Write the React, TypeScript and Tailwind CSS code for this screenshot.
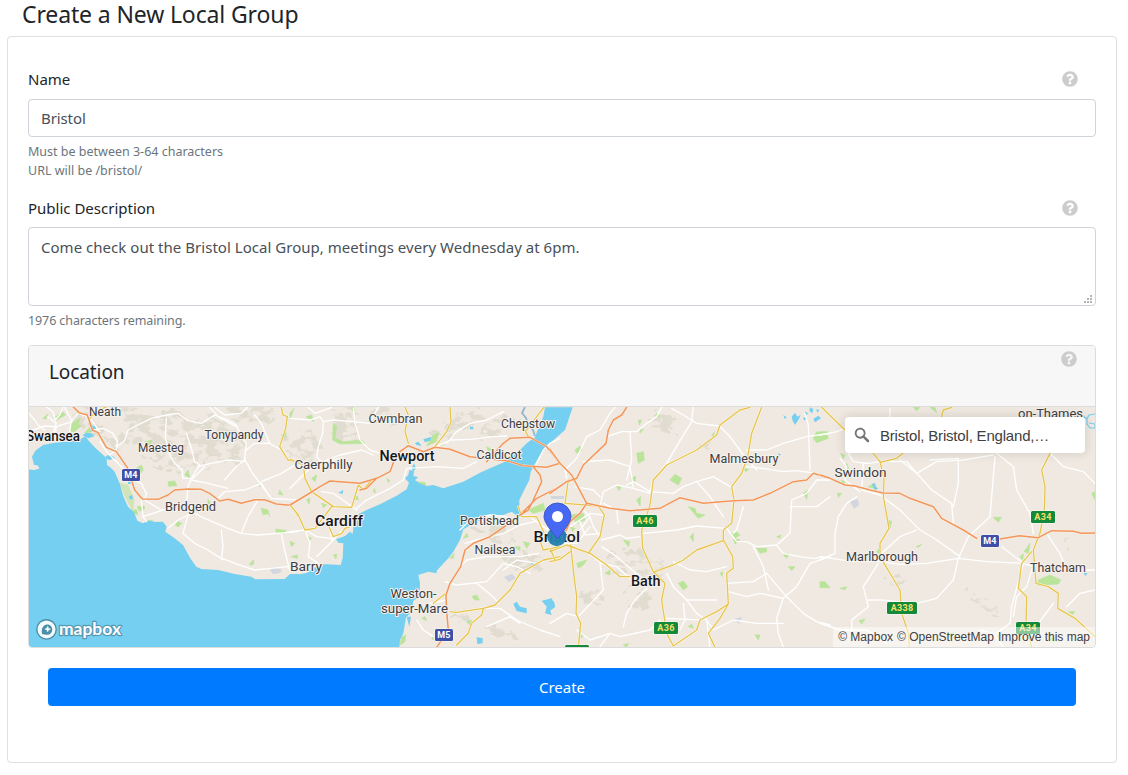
import React from "react";
import { FaQuestionCircle } from "react-icons/fa";

type Tile = { x: number; roads: string[]; main: string[]; motorway: string[]; parks: string[]; relief: string[] };

// Each tile is drawn at three units per pixel, with its own horizontal origin.
const west: Tile = {
  x: 28,
  roads: [
    "M3 40L20 60 30 75 50 90M55 20L75 35 82 60 95 45 105 22M0 95L50 78 85 80 130 65 150 40 175 48M85 80L80 110M110 22L130 60 125 95M205 20L185 45M180 45L215 95M60 50L85 70 70 110",
    "M198 90L225 85 255 100 268 125 265 150M265 140L290 122 300 90 330 75 370 55 415 45 450 40 480 62 520 70 560 45 600 60 625 75 640 110 655 130 650 175 670 215 700 255 730 295",
    "M415 55L412 110 425 165 440 190 462 210 465 235M475 100L490 145 500 185 515 195 490 235 480 260 475 320 485 345M545 22L570 50 625 80M655 150L680 130 725 130 760 150M510 200L550 190 600 180 650 185M465 235L495 235 530 200",
    "M216 125L240 160 275 195 310 235 340 250 355 280 350 300 400 330 480 330 530 355 600 385 640 400 690 405 810 395",
    "M340 300L345 350 355 365M345 350L405 330M420 385L450 360 480 345 490 320M480 345L465 400 500 430 540 450 570 470 620 490 680 510 730 505 780 500M580 390L585 440 580 480M640 400L660 350 690 300M760 400L770 450 785 510M730 295L810 300M570 295L590 275 650 270 700 250 725 290M700 245L760 220 810 190M490 240L540 250 600 265",
    "M265 150L245 165 225 140M560 22L590 45 640 40 660 20M725 130L700 70 680 45M650 180L620 205 590 240",
  ],
  main: ["M760 22L765 45 778 50 773 85 755 140 780 180 810 185", "M786 315L800 330 810 350", "M182 60L200 38 235 20"],
  motorway: ["M135 20L153 38 178 45 193 90 210 98 235 142 265 155 298 203 312 245 320 270 343 297 390 298 420 285 440 270 480 267 520 268 545 280 575 303 600 298 640 310 680 299 710 299 745 312 785 316 810 300"],
  parks: [
    "M45 55L60 42 53 58ZM78 53L105 36 113 44 85 61ZM125 92L133 70 157 55 150 72 160 78 138 96ZM170 98L185 82 188 97Z",
    "M302 335L325 328 330 343 310 342ZM328 320L348 318 350 326 335 334ZM420 246L440 243 447 257 422 259ZM325 205L340 195 346 210 335 223ZM470 225L480 210 486 235ZM442 375L450 365 461 370 450 381ZM360 362L374 360 367 371Z",
    "M700 325L705 345 722 340 725 350 720 330ZM755 270L765 285 752 283ZM743 387L775 392 770 400 745 399ZM790 425L800 431 793 438ZM665 492L676 480 677 492 668 496ZM690 250L700 250 696 260ZM760 105L775 98 772 120ZM350 125L372 120 365 137ZM540 298L548 310 540 316ZM790 470L808 465 808 475Z",
  ],
  relief: [
    "M120 60L180 20 230 100 270 135 300 90 370 80 420 40 500 75 545 55 600 80 650 140 630 190 560 170 520 180 495 215 440 180 400 130 360 150 320 110 280 150 240 120 190 90Z",
    "M300 20L360 50 420 25 480 60 430 65 350 90 320 75 290 100ZM390 70L460 100 440 135 480 180 450 200 395 135ZM510 90L590 65 620 100 600 145 560 130 535 165 505 150ZM600 20L730 25 735 65 690 55 650 75 610 50ZM360 180L425 165 440 205 390 205Z",
  ],
};

const severn: Tile = {
  x: 290,
  roads: [
    "M0 55L60 60 90 50 100 65 98 100 85 140 80 170 95 185 160 175M55 22L75 40 125 22M100 65L130 60 190 65 240 70 265 20M190 25L195 70 210 120 240 150 270 160M0 265L60 205 110 180 150 165 215 150 250 165",
    "M435 142L480 120 540 118 610 110 650 108M350 205L440 200 520 205 560 185M350 205L340 240 300 265 230 300 200 325M470 130L500 95 540 70 590 60 640 35M0 395L45 390 80 410 120 415M95 275L130 280 200 330M120 390L125 420 160 390M45 390L60 430 55 470 85 490M135 415L110 440 80 470",
    "M510 390L540 360 600 345 650 350M525 430L560 420 640 400 690 375 735 365M510 500L530 480 590 470 690 470 745 460M465 545L500 555 590 545 640 490 680 500 720 520M580 625L630 625 680 660 750 690 810 710M380 660L400 690 430 710M560 550L610 590 625 610M590 680L660 650 690 670M420 610L470 600M720 350L760 380 810 410M735 200L760 150 780 130 810 115M640 510L680 480 740 490",
  ],
  main: [
    "M345 22L355 45 345 95 355 130M480 22L483 65 470 95 435 140M0 178L40 195 45 235 65 275 130 320 185 322 205 255M0 315L25 345 45 390 75 385 125 320M115 375L130 410 155 400 165 385 180 380M705 90L715 110M762 22L740 50 710 90M205 255L220 270 245 240",
    "M430 610L465 582M480 635L500 637 580 625 615 615 660 570 690 520 725 500 760 480 810 470M580 625L575 645 545 670 535 700 500 735M685 320L695 350 740 350 765 405 810 420M745 410L760 450 810 440",
  ],
  motorway: [
    "M0 315L50 285 90 260 120 243 210 250 260 235 300 215 313 180 330 155 355 137 400 155 435 142 480 148 540 170 650 182 700 197 770 202 810 190",
    "M590 185L640 130 660 115 720 112 770 140 810 190M730 200L750 225 755 245 730 300 715 330 690 345 650 375 600 410 550 430 525 450 512 500 480 550 468 585 470 635 475 690 440 742M700 335L740 295 810 260M210 270L230 265 260 235",
  ],
  parks: [
    "M0 40L12 25 0 58ZM48 50L65 45 72 65ZM130 70L140 80 135 115 160 125 215 120 225 130 150 132 128 120ZM410 138L430 105 447 98 438 125ZM185 20L195 30 188 34ZM65 235L80 225 75 245ZM50 298L60 295 57 312ZM95 310L110 315 100 323ZM190 295L202 287 205 300ZM250 275L253 265 257 278ZM290 235L300 242 295 247Z",
    "M375 245L405 248 408 262 380 258ZM520 415L530 400 535 410ZM480 475L492 460 490 475ZM545 590L560 585 568 600 555 600ZM715 330L760 310 765 330 730 340ZM700 425L720 430 710 445ZM670 440L690 440 690 452ZM530 665L545 660 540 675ZM335 712L347 705 345 725 330 735ZM395 655L405 650 410 662ZM425 715L430 710 430 720ZM590 140L605 148 595 155ZM55 410L65 415 58 422ZM0 425L12 430 4 440ZM130 465L140 462 138 477Z",
  ],
  relief: [
    "M120 50L180 22 200 45 195 100 160 125 140 110ZM0 125L60 85 85 140 60 180 0 160ZM430 110L490 50 560 20 570 50 500 95 450 135ZM560 390L650 380 680 410 620 425ZM645 475L740 470 735 505 670 500ZM480 650L520 640 530 660Z",
    "M240 70L290 25 310 60 280 85ZM580 105L615 65 670 60 640 90ZM600 690L650 685 670 710 630 710Z",
  ],
};

const bath: Tile = {
  x: 550,
  roads: [
    "M50 235L45 210 80 175 110 110 150 90 180 40 195 22M170 110L215 95 260 95 290 70 320 50 335 22M430 20L425 65 385 130 350 190M365 25L400 45 440 70 508 78 540 110 580 165 620 210M590 150L650 150 700 130 770 110 840 100M765 40L775 75 780 210M590 200L640 205 700 215 740 212 800 220M300 280L250 265 200 255 160 275 150 320",
    "M300 275L370 280 400 260 440 245 490 230 550 265M300 275L310 240 350 190M155 420L210 405 230 415 270 410M280 400L380 390 440 378 530 385M160 310L200 330 205 370M530 385L560 425 590 425 620 440 680 435 700 460 750 470 790 475 840 470M680 435L720 400 725 300 770 280 800 240 840 240M530 550L610 545 650 520 710 590 760 640 800 665 840 675M700 595L630 580 590 590 535 575M700 595L680 655 685 700 700 742M700 595L740 560 780 490 840 470",
    "M120 350L130 380 150 410M90 390L120 350 100 330M115 460L155 490 200 500 240 535M0 670L50 640 85 650 160 570 150 490M80 690L120 720 180 700 210 710 300 690 330 660M290 565L255 600 230 640 220 680M180 700L150 740M350 520L370 560 410 600 440 640 470 660 480 742M370 485L420 510 470 515 530 500M400 610L405 660 390 690M410 600L500 600M350 655L450 660M470 660L490 690 550 660 620 670 700 670M610 440L640 500 655 570M580 320L560 390 550 400M230 255L250 245 300 275M75 260L130 270 150 290M60 380L120 340 160 345M90 365L105 405 150 400",
    "M100 185L180 180 240 200 250 260M240 95L245 180 230 240M0 430L80 430 120 380M155 440L200 470 270 530M720 320L800 320 840 290M520 350L480 290 440 245",
  ],
  main: [
    "M600 22L570 30 510 75 500 105 440 150 350 195 310 240 300 315 275 390 278 445 310 515 345 550 335 600 350 700 370 738 440 690 450 660 500 635 535 612M635 22L605 100 593 170 575 220 545 260 552 300 545 370 520 390 520 420 548 470 550 505 530 520 535 612 510 655 475 700 495 742",
    "M315 515L370 495 400 480 440 450 520 422M0 455L50 435 120 460 170 495 210 530 240 530M55 240L45 310 145 318 163 345 150 410 115 460M62 435L72 530 80 590 78 640 92 670 85 742M0 485L30 478 60 455M0 445L15 480",
  ],
  motorway: [
    "M230 22L215 45 190 60 175 90 168 130 100 195 80 235 50 245 0 280M0 148L30 190 65 225 110 310 180 325 240 332 330 325 390 293 460 310 550 302 610 300 660 280 730 245 770 240 790 220 840 235M110 310L90 340 60 365 40 410",
  ],
  parks: [
    "M75 150L90 138 96 150 80 160ZM260 160L280 155 283 180 265 190ZM360 240L375 223 395 235 385 255ZM245 235L257 228 255 250 247 250ZM200 260L215 258 207 272ZM260 300L272 290 270 318ZM415 320L435 325 440 340 465 345 445 355ZM320 40L330 48 318 52ZM270 90L280 87 270 100ZM485 105L493 97 490 110ZM790 115L800 95 830 100 835 115 800 128Z",
    "M60 345L100 340 105 360 80 370ZM25 380L50 395 30 400ZM420 410L430 400 430 425ZM220 420L240 425 235 440ZM545 400L560 395 570 405 555 415ZM385 550L400 543 413 560 400 570ZM165 520L180 510 180 525ZM92 700L103 705 93 715ZM415 680L425 672 430 685ZM620 445L650 445 650 455 630 460ZM715 500L735 500 725 512ZM700 465L716 460 710 475ZM680 410L692 405 690 415ZM615 705L630 705 625 720ZM760 280L775 270 770 298ZM80 490L110 480 100 495 85 505ZM220 735L235 730 230 742ZM580 205L597 208 587 215ZM550 415L570 420 555 432ZM510 520L518 515 517 530ZM265 60L275 60 268 75ZM60 380L75 385 68 395Z",
  ],
  relief: [
    "M220 460L260 440 300 490 340 480 350 510 300 540 250 500 180 500ZM250 570L300 590 290 630 240 620ZM310 80L340 30 360 50 350 90ZM350 60L375 60 370 85ZM90 590L140 570 150 590 100 600ZM460 135L480 130 475 145Z",
  ],
};

const east: Tile = {
  x: 820,
  roads: [
    "M0 105L50 95 75 85M85 160L100 185 145 190 180 185M130 190L125 270 180 285M60 175L80 200 75 240 120 275M110 290L80 310 55 350 45 400 45 460 0 480M0 470L100 485 180 485 240 493 320 490 415 475 500 485 610 490M415 475L445 410 510 350 525 170M415 475L400 540 350 595 290 610 180 600 145 600M175 490L130 560 145 620 95 660 95 720M210 185L260 185 335 270 395 310 400 370",
    "M180 285L240 330 300 390 350 420 420 470M210 25L210 50M530 160L580 200 590 270 630 340 640 400M330 180L415 175 415 250 400 320M240 180L290 220 350 185 430 180 520 165M690 160L730 200 790 215 825 250M680 400L720 460 740 510 825 510M545 440L610 490 640 500M610 490L575 620 570 670 530 700M640 495L620 560 590 590 580 650M825 570L780 580 740 620M700 610L640 690M0 670L60 690 140 690 200 730M480 690L520 700 550 742M185 460L240 410 290 390",
  ],
  main: [
    "M5 22L75 90 160 160 180 185 192 235 190 290 207 385 180 430 180 470 240 570 245 640 265 700 268 742M180 187L230 175 250 158M395 22L370 30 365 50M690 160L665 210 675 260 673 330 660 400 640 450 648 550 685 560 715 580 713 625 765 655 825 710M635 455L605 490 595 565 620 590 618 670 635 742",
  ],
  motorway: ["M0 225L30 235 75 255 105 258 150 270 190 279 240 280 270 295 340 320 365 355 430 390 470 415M540 417L600 407 655 413 695 392 760 394 785 400 825 399"],
  parks: [
    "M0 95L25 95 15 118 0 118ZM62 160L75 165 70 178ZM80 190L86 205 80 210ZM52 280L65 280 55 292ZM145 260L165 250 170 268ZM205 360L215 365 210 385ZM170 455L178 445 180 465ZM520 352L545 352 535 367ZM288 440L305 433 295 442ZM655 540L690 525 722 540 715 552 655 556ZM612 455L630 430 625 460ZM600 470L610 462 608 480ZM0 545L15 545 30 563 0 563ZM60 565L80 560 75 570ZM117 662L135 657 125 672ZM745 635L765 635 758 643ZM815 280L825 275 825 300ZM330 22L345 22 350 38ZM380 700L405 698 390 712ZM65 240L75 245 68 255ZM685 720L700 712 705 725ZM280 22L300 22 290 32Z",
  ],
  relief: ["M460 590L480 590 490 610 470 610ZM490 600L525 620 520 640 505 630ZM215 540L240 535 240 550ZM735 425L742 425 738 432Z"],
};

const tiles: Tile[] = [west, severn, bath, east];

const water: { x: number; d: string }[] = [
  { x: 28, d: "M0 208L20 210 35 205 28 196 18 195 12 170 22 152 45 135 80 128 150 122 172 108 182 122 200 142 236 175 237 195 250 205 260 215 275 250 287 292 300 320 318 337 328 362 345 370 362 362 385 366 405 365 416 380 412 395 440 415 465 435 487 475 505 500 520 507 570 510 620 522 670 530 682 538 770 537 786 522 812 522 812 745 0 745Z" },
  { x: 28, d: "M163 105L175 98 190 100 200 108 182 115ZM188 95L190 75 202 80 205 92ZM232 170L245 163 262 174 245 180 237 178ZM302 290L312 284 315 295 307 299ZM300 245H308V252H300Z" },
  { x: 290, d: "M0 522L20 524 50 519 70 505 95 492 152 495 158 475 160 430 145 428 138 418 165 408 180 395 188 402 190 385 200 345 230 330 270 313 320 287 350 268 357 248 345 235 355 225 358 210 372 213 370 228 385 232 375 240 388 250 410 258 430 255 460 265 490 255 520 245 570 218 600 205 650 183 690 150 710 130 735 112 745 85 760 50 765 22 848 22 825 90 800 112 780 130 750 165 730 200 722 215 718 240 700 275 688 300 688 325 700 345 685 350 665 335 640 345 600 345 560 365 520 388 510 420 490 455 475 475 440 512 440 520 415 515 385 525 390 550 388 590 370 602 365 637 348 652 340 700 330 720 328 745 0 745Z" },
  { x: 290, d: "M145 278L160 270 158 282ZM375 130L385 125 395 138 380 135ZM400 118L425 110 420 122 405 127ZM365 205L372 190 378 205 370 215ZM540 80H550V88H540ZM670 612L680 605 690 620 710 625 710 640 680 633ZM755 602L785 595 795 615 780 630 785 645 765 640 770 620ZM560 712L578 714 578 730 562 732ZM720 488L733 485 730 495ZM350 650L363 650 358 680Z" },
  { x: 550, d: "M0 600L12 605 15 622 0 632ZM725 50L735 38 742 50 752 45 745 60 735 75 728 62ZM765 35L775 40 765 48ZM780 22L790 28 787 40 778 32ZM790 57L805 47 813 55 795 67ZM798 28L808 30 803 38ZM700 45L710 52 704 57ZM685 160L693 163 686 170ZM760 52L770 55 762 62Z" },
  { x: 820, d: "M155 252L163 250 168 262 175 265 165 270ZM790 520L802 518 798 528Z" },
];

const towns = [
  { t: "Neath", x: 89, y: 416, w: 32 }, { t: "Tonypandy", x: 204.5, y: 439, w: 59 },
  { t: "Maesteg", x: 138, y: 452, w: 46 }, { t: "Bridgend", x: 165, y: 511, w: 51 },
  { t: "Caerphilly", x: 294.5, y: 469, w: 58 }, { t: "Cwmbran", x: 368.5, y: 423, w: 54 },
  { t: "Chepstow", x: 501, y: 428, w: 54 }, { t: "Caldicot", x: 476.5, y: 459, w: 45 },
  { t: "Portishead", x: 460, y: 525, w: 59 }, { t: "Nailsea", x: 474.5, y: 554, w: 41 },
  { t: "Weston-", x: 390.5, y: 598, w: 46 }, { t: "super-Mare", x: 381, y: 613, w: 67 },
  { t: "Barry", x: 290, y: 571, w: 32 }, { t: "Malmesbury", x: 709.5, y: 463, w: 69 },
  { t: "Swindon", x: 834.5, y: 477, w: 52 }, { t: "Marlborough", x: 846, y: 561, w: 72 },
  { t: "Thatcham", x: 1030, y: 572, w: 56 }, { t: "on-Thames", x: 1018, y: 418, w: 65 },
];

const cities = [
  { t: "Swansea", x: 26, y: 441, w: 54 }, { t: "Newport", x: 379.5, y: 461, w: 55 },
  { t: "Cardiff", x: 315, y: 525.5, w: 48 }, { t: "Bristol", x: 533.5, y: 542, w: 46.5 },
  { t: "Bath", x: 631, y: 585.5, w: 29.5 },
];

const shields = [
  { t: "M4", x: 122, y: 469, w: 18 }, { t: "M5", x: 435, y: 629, w: 18 }, { t: "M4", x: 981, y: 535, w: 18 },
  { t: "A46", x: 633, y: 515, w: 24 }, { t: "A36", x: 654, y: 622, w: 24 }, { t: "A34", x: 1031, y: 511, w: 24 },
  { t: "A34", x: 1016, y: 622, w: 24 }, { t: "A338", x: 887, y: 602, w: 30 }, { t: "A37", x: 565, y: 645, w: 24 },
];

function MapCanvas() {
  return (
    <svg className="block h-[240px] w-full" viewBox="29 407 1066 240" preserveAspectRatio="none">
      <defs>
        <filter id="relief" x="-5%" y="-5%" width="110%" height="110%">
          <feTurbulence type="fractalNoise" baseFrequency="0.03 0.045" numOctaves="3" seed="6" result="n" />
          <feDisplacementMap in="SourceGraphic" in2="n" scale="70" result="shape" />
          <feColorMatrix in="n" type="matrix" values="0 0 0 0 0  0 0 0 0 0  0 0 0 0 0  9 0 0 0 -4" result="mask" />
          <feComposite in="shape" in2="mask" operator="in" />
        </filter>
      </defs>
      <rect x="29" y="407" width="1066" height="240" fill="#efe9e1" />
      {tiles.map((s) => (
        <g key={s.x} transform={`translate(${s.x} 400) scale(.33333)`}>
          <path d={s.relief.join("")} fill="#dedacd" opacity=".85" stroke="#dedacd" strokeWidth="14" filter="url(#relief)" />
          <path d={s.parks.join("")} fill="#b9e49a" stroke="#b9e49a" strokeWidth="2" strokeLinejoin="round" />
        </g>
      ))}
      <path d="M119.500 483L128 484.500 134.500 500 133 512 125 497Z" fill="#d0e4b8" />
      <g fill="#d3d5df">
        <path d="M270 570l5-3 7 3-2 3-7 1zM504 577l8-3 4 4-7 4zM734 619l8-2-3 7zM850 501l8-2 1 6-5 4zM551 496h13v3h-13z" />
      </g>
      {water.map((s, i) => (
        <path key={i} d={s.d} transform={`translate(${s.x} 400) scale(.33333)`} fill="#75cff0" />
      ))}
      <path d="M525 407l-3 6 4 5 2 6 5 6 2 6" fill="none" stroke="#8fb8cf" strokeWidth="1.8" />
      <path d="M1083 416l4 3 2-4 6-1M1087 419v5l3 4h5v-4l-6-1" fill="none" stroke="#75cff0" strokeWidth="1.2" />
      {tiles.map((s) => (
        <g key={s.x} transform={`translate(${s.x} 400) scale(.33333)`} fill="none" strokeLinejoin="round" strokeLinecap="round">
          <path d={s.roads.join("")} stroke="#ffffff" strokeWidth="4" />
          <path d={s.main.join("")} stroke="#fffbe8" strokeWidth="6.500" />
          <path d={s.main.join("")} stroke="#e7c44f" strokeWidth="4" />
          <path d={s.motorway.join("")} stroke="#fdf3ea" strokeWidth="6.500" />
          <path d={s.motorway.join("")} stroke="#f2965a" strokeWidth="4.600" />
        </g>
      ))}
      <g className="font-['Roboto',sans-serif] text-[12.5px]" fill="#3d3d42" stroke="#f6f2ee" strokeWidth="2" strokeLinejoin="round" paintOrder="stroke">
        {towns.map((s) => (
          <text key={s.t} x={s.x} y={s.y} textLength={s.w} lengthAdjust="spacingAndGlyphs">{s.t}</text>
        ))}
      </g>
      <g className="font-['Roboto',sans-serif] text-[15px] font-medium" fill="#17171a" stroke="#f6f2ee" strokeWidth="2" strokeLinejoin="round" paintOrder="stroke">
        {cities.map((s) => (
          <text key={s.t} x={s.x} y={s.y} textLength={s.w} lengthAdjust="spacingAndGlyphs">{s.t}</text>
        ))}
      </g>
      {shields.map((s, i) => {
        const blue = s.t[0] === "M";
        return (
          <g key={i}>
            <rect x={s.x - 0.5} y={s.y - 0.5} width={s.w + 1} height="13" rx="2" fill="#fff" opacity=".8" />
            <rect x={s.x} y={s.y} width={s.w} height="12" rx="1.5" fill={blue ? "#3f4fa8" : "#128a3a"} />
            <text x={s.x + s.w / 2} y={s.y + 9.3} textAnchor="middle" fill={blue ? "#fff" : "#f3e06a"} className="font-['Roboto',sans-serif] text-[9px] font-bold tracking-[.3px]">{s.t}</text>
          </g>
        );
      })}
      <circle cx="556.8" cy="536.5" r="9.7" fill="#2580ae" opacity=".96" />
      <g transform="translate(544 503)">
        <path d="M27 13.5C27 19.07 20.25 27 14.75 34.5c-.73 1-1.77 1-2.5 0C6.75 27 0 19.22 0 13.5a13.5 13.5 0 0 1 27 0Z" fill="#4668f2" stroke="#3852c4" strokeWidth=".9" />
        <circle cx="13.5" cy="13.5" r="5.5" fill="#fff" />
      </g>
      <g>
        <circle cx="46.5" cy="629.4" r="10.4" fill="#4c8fa8" />
        <circle cx="46.5" cy="629.4" r="9" fill="#f4fbfe" />
        <path d="M42 634.1c-.7-4.3.1-6.5 1.7-8 2.1-2 5.3-2 7.2 0s1.9 5.100 0 7.100c-1.700 1.600-4.300 2.200-8.900.9Z" fill="#4c8fa8" />
        <path d="M47.700 626.300l.8 2 2 .8-2 .8-.8 2-.8-2-2-.8 2-.8z" fill="#fff" stroke="#fff" strokeWidth=".5" />
        <text x="59" y="634.5" textLength="62" lengthAdjust="spacingAndGlyphs" fill="#fff" stroke="#5598b1" strokeWidth="2.4" strokeLinejoin="round" paintOrder="stroke" className="font-['Lato',sans-serif] text-[17px] font-bold">mapbox</text>
      </g>
    </svg>
  );
}

function Help() {
  return <FaQuestionCircle className="size-4 text-[#cccccc]" />;
}

export default function App() {
  return (
    <div className="h-[775px] overflow-hidden bg-white pl-[7px] pr-[11px] font-['Noto_Sans','Open_Sans',sans-serif] text-base text-[#212529]">
      <h1 className="flex h-9 items-start pl-[15px] text-[23px] leading-[29px] tracking-[-0.13px]"><span>Create a New Local Group</span></h1>
      <main className="h-[727px] rounded border border-[#dfdfdf] px-5 pt-[30px]">
        <div className="flex h-6 items-center justify-between pr-[18px]">
          <label htmlFor="name" className="text-[15px]">Name</label>
          <Help />
        </div>
        <input id="name" defaultValue="Bristol" className="mt-2 block h-[38px] w-full rounded border border-[#ced4da] px-3 text-[15px] tracking-[-0.1px] text-[#495057]" />
        <div className="mt-[5px] text-[12.5px] leading-[19px] text-[#6c757d]">
          <p><span>Must be between 3-64 characters</span></p>
          <p><span>URL will be /bristol/</span></p>
        </div>
        <div className="mt-4 flex h-6 items-center justify-between pr-[18px]">
          <label htmlFor="desc" className="text-[15px]">Public Description</label>
          <Help />
        </div>
        <div className="relative mt-[7px]">
          <textarea id="desc" defaultValue="Come check out the Bristol Local Group, meetings every Wednesday at 6pm." className="block h-[79px] w-full resize-none rounded border border-[#ced4da] px-3 py-[7px] text-[15px] leading-6 tracking-[0.03px] text-[#495057]" />
          <svg className="absolute bottom-[3px] right-1 h-2 w-2" viewBox="0 0 8 8" fill="#b4b4b4">
            <path d="M0 6h2v2H0zM3 6h2v2H3zM6 6h2v2H6zM3 3h2v2H3zM6 3h2v2H6zM6 0h2v2H6z" />
          </svg>
        </div>
        <p className="mt-[5px] text-[12.5px] leading-[19px] tracking-[-0.1px] text-[#6c757d]"><span>1976 characters remaining.</span></p>
        <section className="mt-[15px] overflow-hidden rounded border border-[#dcdcdc]">
          <header className="flex h-[61px] items-start justify-between border-b border-[#dcdcdc] bg-[#f7f7f7] pl-5 pr-[18px]">
            <h2 className="pt-[14px] text-[19px] leading-6 tracking-[-0.1px]">Location</h2>
            <div className="pt-[5px]"><Help /></div>
          </header>
          <div className="relative">
            <MapCanvas />
            <div className="absolute right-[10px] top-[10px] flex h-9 w-[240px] items-center rounded bg-white pl-[7px] shadow-[0_0_10px_2px_rgba(0,0,0,0.1)]">
              <svg viewBox="0 0 18 18" className="size-5" fill="#757575">
                <path d="M7.4 2.5c-2.7 0-4.9 2.2-4.9 4.9s2.2 4.9 4.9 4.9c1 0 1.8-.2 2.5-.8l3.7 3.7c.2.2.4.3.8.3.7 0 1.1-.4 1.1-1.1 0-.3-.1-.5-.3-.8L11.400 10c.4-.8.8-1.600.8-2.500.1-2.800-2.100-5-4.800-5zm0 1.600c1.800 0 3.200 1.400 3.200 3.200s-1.400 3.200-3.200 3.200-3.300-1.300-3.300-3.100 1.400-3.300 3.300-3.300z" />
              </svg>
              <span className="pl-2 pt-[2px] font-['Liberation_Sans',sans-serif] text-[15px] tracking-[-0.19px] text-[#404040]">Bristol, Bristol, England,…</span>
            </div>
            <div className="absolute bottom-0 right-0 flex h-5 items-center gap-1 whitespace-nowrap bg-white/50 px-[5px] font-['Liberation_Sans',sans-serif] text-[12px] text-[#404040]">
              <span>© Mapbox</span><span>© OpenStreetMap</span><span>Improve this map</span>
            </div>
          </div>
        </section>
        <button className="mx-5 mt-5 block h-[38px] w-[1028px] rounded bg-[#007bff] pt-px text-[15px] text-white">Create</button>
      </main>
    </div>
  );
}
